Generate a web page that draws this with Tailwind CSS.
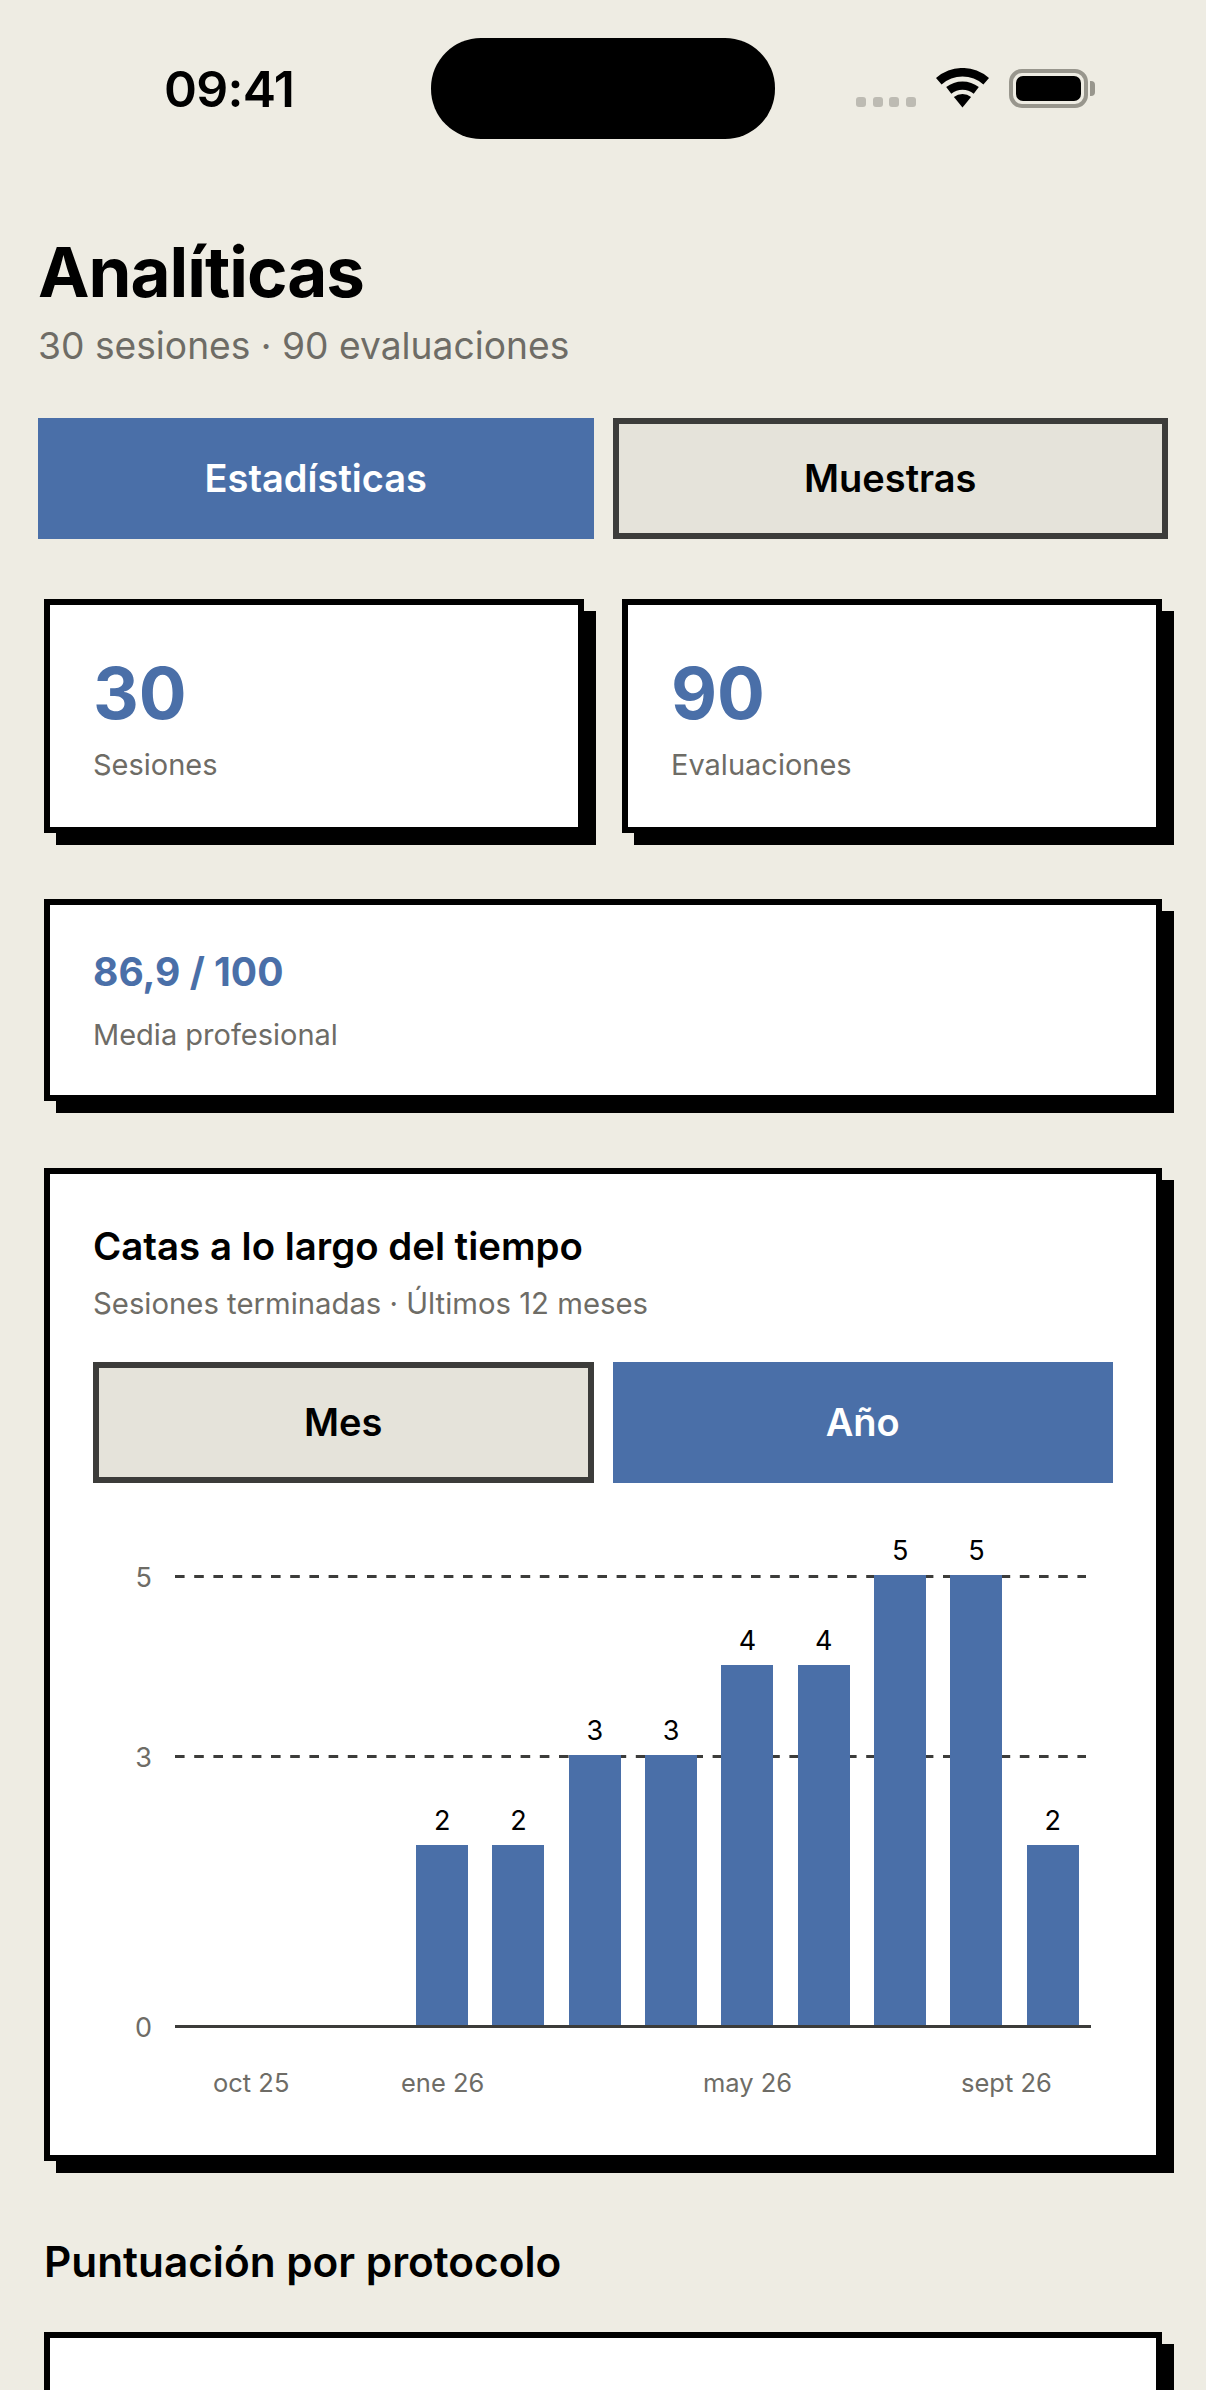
<!doctype html>
<html lang="es">
<head>
<meta charset="utf-8">
<title>Analíticas</title>
<script src="https://cdn.jsdelivr.net/npm/@tailwindcss/browser@4"></script>
</head>
<body class="bg-[#eeece3] font-['Inter',sans-serif] text-black">
<div class="relative w-[1206px] h-[2390px] overflow-hidden bg-[#eeece3]">
  <!-- status bar -->
  <div class="relative h-[180px]">
    <div class="absolute left-[164px] top-[61px] text-[50px] leading-[56px] font-semibold tracking-[-0.7px]">09:41</div>
    <div class="absolute left-[431px] top-[38px] w-[344px] h-[101px] rounded-[50px] bg-black"></div>
    <div class="absolute left-[856px] top-[97px] flex gap-[6.5px]">
      <span class="w-[10px] h-[10px] rounded-[3px] bg-[#bdbbb3]"></span>
      <span class="w-[10px] h-[10px] rounded-[3px] bg-[#bdbbb3]"></span>
      <span class="w-[10px] h-[10px] rounded-[3px] bg-[#bdbbb3]"></span>
      <span class="w-[10px] h-[10px] rounded-[3px] bg-[#bdbbb3]"></span>
    </div>
    <svg class="absolute left-[936px] top-[68px]" width="53" height="40" viewBox="0 0 53 40">
      <path d="M0 10 A40 40 0 0 1 53 10 L47.4 16.4 A31.5 31.5 0 0 0 5.6 16.4 Z" fill="#000"/>
      <path d="M10.2 19.1 A26.5 26.5 0 0 1 42.8 19.1 L37.7 25.7 A18.2 18.2 0 0 0 15.3 25.7 Z" fill="#000"/>
      <path d="M17.9 29 A14 14 0 0 1 35.1 29 L26.5 39.5 Z" fill="#000"/>
    </svg>
    <div class="absolute left-[1009px] top-[69px] w-[79px] h-[39px] rounded-[13px] border-[4px] border-[#98968d] p-[3px]">
      <div class="w-full h-full rounded-[7px] bg-black"></div>
    </div>
    <div class="absolute left-[1090px] top-[81px] w-[5px] h-[15px] rounded-r-[4px] bg-[#98968d]"></div>
  </div>

  <div class="px-[38px]">
    <h1 class="text-[69px] leading-[80px] font-bold tracking-[-1px] mt-[52px]">Analíticas</h1>
    <p class="text-[37.2px] leading-[48px] text-[#6e6c66] mt-[10px]">30 sesiones · 90 evaluaciones</p>

    <div class="grid grid-cols-2 gap-[19px] mt-[48px]">
      <div class="h-[121px] flex items-center justify-center bg-[#4a6fa8] text-white text-[38px] font-semibold">Estadísticas</div>
      <div class="h-[121px] flex items-center justify-center bg-[#e5e3da] border-[6px] border-[#3c3c3a] text-[38px] font-semibold">Muestras</div>
    </div>
  </div>

  <div class="px-[44px]">
    <div class="grid grid-cols-2 gap-[38px] mt-[60px]">
      <div class="h-[234px] bg-white border-[6px] border-black shadow-[12px_12px_0_#000] pl-[43px] pt-[46px]">
        <div class="text-[71px] leading-[84px] font-bold text-[#4a6fa8]">30</div>
        <div class="text-[29px] leading-[38px] text-[#6e6c66] mt-[11px]">Sesiones</div>
      </div>
      <div class="h-[234px] bg-white border-[6px] border-black shadow-[12px_12px_0_#000] pl-[43px] pt-[46px]">
        <div class="text-[71px] leading-[84px] font-bold text-[#4a6fa8]">90</div>
        <div class="text-[29px] leading-[38px] text-[#6e6c66] mt-[11px]">Evaluaciones</div>
      </div>
    </div>

    <div class="h-[202px] mt-[66px] bg-white border-[6px] border-black shadow-[12px_12px_0_#000] pl-[43px] pt-[43px]">
      <div class="text-[39px] leading-[48px] font-bold text-[#4a6fa8]">86,9 / 100</div>
      <div class="text-[29px] leading-[38px] text-[#6e6c66] mt-[20px]">Media profesional</div>
    </div>

    <div class="h-[993px] mt-[67px] bg-white border-[6px] border-black shadow-[12px_12px_0_#000] px-[43px] pt-[48px]">
      <div class="text-[38.4px] leading-[48px] font-semibold">Catas a lo largo del tiempo</div>
      <div class="text-[29.3px] leading-[38px] text-[#6e6c66] mt-[15px]">Sesiones terminadas · Últimos 12 meses</div>

      <div class="grid grid-cols-2 gap-[19px] mt-[39px]">
        <div class="h-[121px] flex items-center justify-center bg-[#e5e3da] border-[6px] border-[#3c3c3a] text-[38px] font-semibold">Mes</div>
        <div class="h-[121px] flex items-center justify-center bg-[#4a6fa8] text-white text-[38px] font-semibold">Año</div>
      </div>

      <!-- chart -->
      <div class="relative mt-[92px] ml-[82px] w-[916px] h-[453px]">
        <svg class="absolute left-0 top-0" width="916" height="453" viewBox="0 0 916 453">
          <line x1="0" x2="911" y1="1.5" y2="1.5" stroke="#3c3c3a" stroke-width="3" stroke-dasharray="9.6 9.6"/>
          <line x1="0" x2="911" y1="181.5" y2="181.5" stroke="#3c3c3a" stroke-width="3" stroke-dasharray="9.6 9.6"/>
        </svg>
        <div class="absolute right-full top-[-13px] mr-[23px] text-[27px] leading-[32px] text-[#6e6c66]">5</div>
        <div class="absolute right-full top-[167px] mr-[23px] text-[27px] leading-[32px] text-[#6e6c66]">3</div>
        <div class="absolute right-full top-[437px] mr-[23px] text-[27px] leading-[32px] text-[#6e6c66]">0</div>

        <div class="relative grid grid-cols-12 items-end h-[453px] border-b-[3px] border-[#3c3c3a]">
          <div></div><div></div><div></div>
          <div class="relative w-[52px] h-[180px] justify-self-center bg-[#4a6fa8]"><span class="absolute bottom-full inset-x-0 mb-[8px] text-center text-[27px] leading-[32px]">2</span></div>
          <div class="relative w-[52px] h-[180px] justify-self-center bg-[#4a6fa8]"><span class="absolute bottom-full inset-x-0 mb-[8px] text-center text-[27px] leading-[32px]">2</span></div>
          <div class="relative w-[52px] h-[270px] justify-self-center bg-[#4a6fa8]"><span class="absolute bottom-full inset-x-0 mb-[8px] text-center text-[27px] leading-[32px]">3</span></div>
          <div class="relative w-[52px] h-[270px] justify-self-center bg-[#4a6fa8]"><span class="absolute bottom-full inset-x-0 mb-[8px] text-center text-[27px] leading-[32px]">3</span></div>
          <div class="relative w-[52px] h-[360px] justify-self-center bg-[#4a6fa8]"><span class="absolute bottom-full inset-x-0 mb-[8px] text-center text-[27px] leading-[32px]">4</span></div>
          <div class="relative w-[52px] h-[360px] justify-self-center bg-[#4a6fa8]"><span class="absolute bottom-full inset-x-0 mb-[8px] text-center text-[27px] leading-[32px]">4</span></div>
          <div class="relative w-[52px] h-[450px] justify-self-center bg-[#4a6fa8]"><span class="absolute bottom-full inset-x-0 mb-[8px] text-center text-[27px] leading-[32px]">5</span></div>
          <div class="relative w-[52px] h-[450px] justify-self-center bg-[#4a6fa8]"><span class="absolute bottom-full inset-x-0 mb-[8px] text-center text-[27px] leading-[32px]">5</span></div>
          <div class="relative w-[52px] h-[180px] justify-self-center bg-[#4a6fa8]"><span class="absolute bottom-full inset-x-0 mb-[8px] text-center text-[27px] leading-[32px]">2</span></div>
        </div>
        <div class="relative h-[40px] mt-[39px] text-[25.5px] leading-[32px] text-[#6e6c66]">
          <span class="absolute left-[38px]">oct 25</span>
          <span class="absolute left-[226px]">ene 26</span>
          <span class="absolute left-[528px]">may 26</span>
          <span class="absolute left-[786px]">sept 26</span>
        </div>
      </div>
    </div>

    <h2 class="text-[42.3px] leading-[52px] font-semibold mt-[75px]">Puntuación por protocolo</h2>
    <div class="h-[200px] mt-[44px] bg-white border-[6px] border-black shadow-[12px_12px_0_#000]"></div>
  </div>
</div>
</body>
</html>
